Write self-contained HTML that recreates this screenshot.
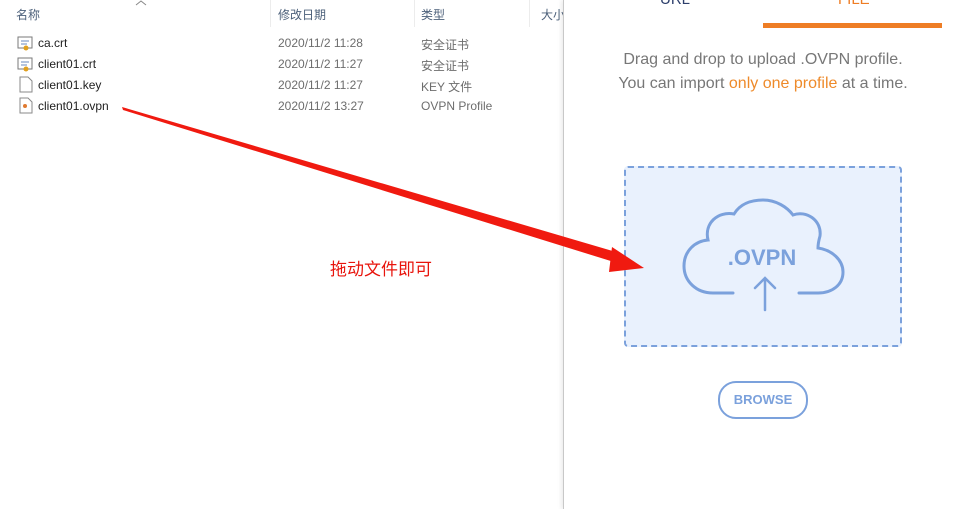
<!DOCTYPE html>
<html><head><meta charset="utf-8"><style>
body{margin:0;width:963px;height:509px;background:#fff;position:relative;overflow:hidden;font-family:"Liberation Sans","Noto Sans CJK SC",sans-serif}
.t{position:absolute;font-size:12px;color:#1e1e1e;white-space:nowrap}
.g{color:#6d6d6d}
.hd{position:absolute;top:0;height:27px;border-right:1px solid #ececec}
</style></head><body>
<div class="hd" style="left:0;width:270px"></div>
<div class="hd" style="left:271px;width:143px"></div>
<div class="hd" style="left:415px;width:114px"></div>
<div class="t" style="left:16px;top:6px;color:#4c607a">名称</div>
<div class="t" style="left:278px;top:6px;color:#4c607a">修改日期</div>
<div class="t" style="left:421px;top:6px;color:#4c607a">类型</div>
<div class="t" style="left:541px;top:6px;color:#4c607a">大小</div>
<svg style="position:absolute;left:135px;top:0" width="12" height="6"><path d="M1,5 L6,1 L11,5" stroke="#888" fill="none"/></svg>

<svg style="position:absolute;left:17px;top:36px" width="18" height="80">
<rect x="1" y="1" width="14" height="11" fill="#fff" stroke="#7a7a7a"/><path d="M4,5H12M4,8H10" stroke="#6a8abf"/><circle cx="9" cy="12" r="2.5" fill="#e0a020"/>
<rect x="1" y="22" width="14" height="11" fill="#fff" stroke="#7a7a7a"/><path d="M4,26H12M4,29H10" stroke="#6a8abf"/><circle cx="9" cy="33" r="2.5" fill="#e0a020"/>
<path d="M3,41H11L15,45V56H3Z" fill="#fff" stroke="#8a8a8a"/>
<path d="M3,62H11L15,66V77H3Z" fill="#fff" stroke="#8a8a8a"/><circle cx="8" cy="70" r="2" fill="#e07a30"/>
</svg>
<div class="t" style="left:38px;top:36px">ca.crt</div>
<div class="t" style="left:38px;top:57px">client01.crt</div>
<div class="t" style="left:38px;top:78px">client01.key</div>
<div class="t" style="left:38px;top:99px">client01.ovpn</div>
<div class="t g" style="left:278px;top:36px">2020/11/2 11:28</div>
<div class="t g" style="left:278px;top:57px">2020/11/2 11:27</div>
<div class="t g" style="left:278px;top:78px">2020/11/2 11:27</div>
<div class="t g" style="left:278px;top:99px">2020/11/2 13:27</div>
<div class="t g" style="left:421px;top:36px">安全证书</div>
<div class="t g" style="left:421px;top:57px">安全证书</div>
<div class="t g" style="left:421px;top:78px">KEY 文件</div>
<div class="t g" style="left:421px;top:99px">OVPN Profile</div>

<div style="position:absolute;left:563px;top:0;width:400px;height:509px;background:#fff;border-left:1px solid #c8c8c8;box-shadow:-2px 0 4px rgba(0,0,0,.08)"></div>
<div class="t" style="left:660px;top:-9px;font-size:15px;color:#2c3e6b">URL</div>
<div class="t" style="left:838px;top:-9px;font-size:15px;color:#ee7d25">FILE</div>
<div style="position:absolute;left:763px;top:23px;width:179px;height:5px;background:#ee7d25"></div>
<div class="t" style="left:563px;width:400px;text-align:center;top:48px;font-size:16px;color:#777;line-height:24px">Drag and drop to upload .OVPN profile.<br>You can import <span style="color:#ee8a2a">only one profile</span> at a time.</div>
<div style="position:absolute;left:624px;top:166px;width:274px;height:177px;background:#e9f1fd;border:2px dashed #7ba1dc;border-radius:4px"></div>
<svg style="position:absolute;left:0;top:0" width="963" height="509">
<path d="M733,293 H713 C696,293 684,281 684,266 C684,251 695,241 708,240 C704,223 718,211 734,214 C740,204 751,200 763,200 C776,200 787,207 793,215 C806,210 822,220 820,236 C818,243 818,246 818,248 C832,250 843,260 843,272 C843,285 832,293 818,293 H799" fill="none" stroke="#7ba1dc" stroke-width="3" stroke-linecap="round"/>
<path d="M765,310 V278 M755,288 L765,278 L775,288" fill="none" stroke="#7ba1dc" stroke-width="2.5" stroke-linecap="round"/>
<text x="762" y="265" text-anchor="middle" font-family="Liberation Sans,sans-serif" font-weight="bold" font-size="22" fill="#7ba1dc">.OVPN</text>
<path d="M122,107 L123,110 L614,262 L616,252 Z" fill="#f01a10"/>
<path d="M644,268 L612,247 L609,272 Z" fill="#f01a10"/>
</svg>
<div class="t" style="left:330px;top:255px;font-size:17px;color:#e8140c">拖动文件即可</div>
<div style="position:absolute;left:718px;top:381px;width:86px;height:34px;border:2px solid #7ba1dc;border-radius:18px;color:#7ba1dc;font-weight:bold;font-size:13px;text-align:center;line-height:34px">BROWSE</div>
</body></html>
